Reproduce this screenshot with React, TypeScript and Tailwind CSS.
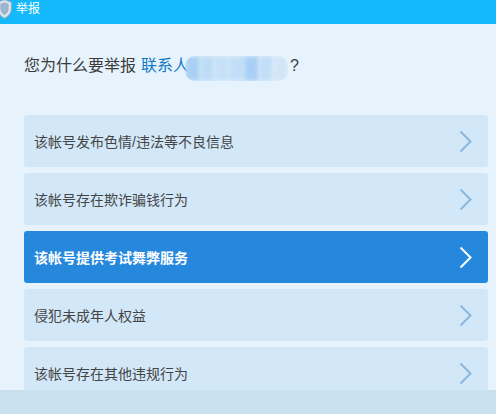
const reasons = [
  '该帐号发布色情/违法等不良信息',
  '该帐号存在欺诈骗钱行为',
  '该帐号提供考试舞弊服务',
  '侵犯未成年人权益',
  '该帐号存在其他违规行为',
]

const blurColors = ['#a9d0f4', '#bcdcf6', '#c6e0f7', '#c2def7', '#a8cff4', '#c2def7', '#d2e6f8']

function Chevron({ color }: { color: string }) {
  return (
    <svg width="13" height="23" viewBox="0 0 13 23" fill="none" stroke={color} strokeWidth="2">
      <path d="M1.5 1.5L11.5 11.5L1.5 21.5" />
    </svg>
  )
}

function Shield() {
  return (
    <svg width="15" height="20" viewBox="0 0 14 19">
      <path d="M7 0.5L13.5 3V9.5C13.5 13.5 10.5 16.5 7 18.5C3.5 16.5 0.5 13.5 0.5 9.5V3Z" fill="#dfe8f0" stroke="#8fa9c4" />
      <path d="M7 3L11 4.5V9.5C11 12 9.2 14 7 15.4C4.8 14 3 12 3 9.5V4.5Z" fill="#9db6cf" />
    </svg>
  )
}

export default function App() {
  return (
    <div className="w-[496px] h-[414px] flex flex-col overflow-hidden bg-[#e6f3fc] font-['Liberation_Sans','Noto_Sans_CJK_SC',sans-serif]">
      <header className="h-6 shrink-0 bg-[#14b9fb] flex items-start gap-[4px] text-white text-xs leading-[18px]">
        <div className="-ml-[3px] -mt-[1px]">
          <Shield />
        </div>
        <span>举报</span>
      </header>

      <main className="flex-1 min-h-0 overflow-hidden px-6 pt-[31px] flex flex-col">
        <div className="h-[22px] flex items-center text-base text-[#3c3c3c] shrink-0">
          <span>您为什么要举报</span>
          <span className="ml-[5px] text-[#0f78c8]">联系人</span>
          <div className="-ml-[4px] w-[103px] h-[25px] mt-[5px] rounded-[10px] overflow-hidden flex">
            {blurColors.map((c, i) => (
              <div key={i} className="flex-1 h-full blur-[2px]" style={{ background: c }} />
            ))}
          </div>
          <span className="ml-[2px]">?</span>
        </div>

        <ul className="mt-[38px] w-[464px] flex flex-col gap-1.5">
          {reasons.map((r, i) => {
            const active = i === 2
            return (
              <li
                key={r}
                className={`h-[52px] shrink-0 rounded-[3px] pl-2.5 pr-4 flex items-center justify-between text-sm ${
                  active ? 'bg-[#2688dd] text-white font-bold' : 'bg-[#d2e8f8] text-[#444444]'
                }`}
              >
                <span className="pt-[2px]">{r}</span>
                <Chevron color={active ? '#ffffff' : '#8ab8de'} />
              </li>
            )
          })}
        </ul>
      </main>

      <footer className="h-6 shrink-0 bg-[#c9e0ee]" />
    </div>
  )
}
